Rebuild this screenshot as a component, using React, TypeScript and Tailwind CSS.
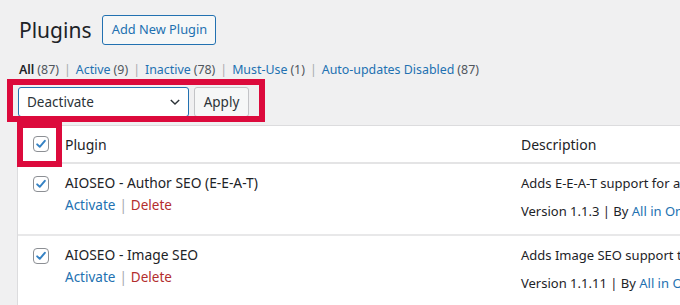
import React from "react";

const RED = "#dc0a3c";

function Check() {
  return (
    <span className="flex h-[16px] w-[16px] items-center justify-center rounded-[4px] border border-[#8c8f94] bg-white">
      <svg width="14" height="14" viewBox="0 0 20 20">
        <path d="M4.5 10.5 L8.2 14 L15.5 5.5" fill="none" stroke="#3582c4" strokeWidth="2.8" strokeLinecap="round" strokeLinejoin="round" />
      </svg>
    </span>
  );
}

function Row({ title, desc, version }: { title: string; desc: string; version: string }) {
  return (
    <div className="flex h-[72px] border-b-2 border-[#e8e8e9] bg-white">
      <div className="w-[47px] shrink-0 pl-[15px] pt-[12px]">
        <Check />
      </div>
      <div className="w-[456px] shrink-0 pt-[9px]">
        <div className="text-[13.8px] leading-[20px] text-[#1d2327]">{title}</div>
        <div className="mt-[2px] text-[13.5px] leading-[20px]">
          <span className="text-[#2271b1]">Activate</span>
          <span className="mx-[4px] text-[#a7aaad]">|</span>
          <span className="text-[#b32d2e]">Delete</span>
        </div>
      </div>
      <div className="shrink-0 whitespace-nowrap pt-[9px] text-[13px] leading-[20px] text-[#1d2327]">
        <div>{desc}</div>
        <div className="mt-[8px]">
          {version} | By <span className="text-[#2271b1]">All in One SEO Team</span>
        </div>
      </div>
    </div>
  );
}

export default function App() {
  return (
    <div
      className="relative h-[305px] w-[680px] overflow-hidden bg-[#f0f0f1] text-[#1d2327]"
      style={{ fontFamily: '"Noto Sans", "Open Sans", sans-serif' }}
    >
      <div className="pl-[19px] pt-[15px]">
        <div className="flex items-center">
          <div className="text-[21px] leading-[30px] text-[#1d2327]">Plugins</div>
          <div className="ml-[11px] flex h-[30px] w-[114px] items-center justify-center rounded-[3px] border border-[#2271b1] bg-[#f6f7f7] text-[12.8px] text-[#2271b1]">
            Add New Plugin
          </div>
        </div>
        <div className="mt-[15px] flex items-center text-[12.4px] leading-[20px] text-[#50575e]">
          <span className="font-semibold text-[#1d2327]">All</span>
          <span className="ml-[3px]">(87)</span>
          <span className="mx-[5px] text-[#a7aaad]">|</span>
          <span className="text-[#2271b1]">Active</span>
          <span className="ml-[3px]">(9)</span>
          <span className="mx-[5px] text-[#a7aaad]">|</span>
          <span className="text-[#2271b1]">Inactive</span>
          <span className="ml-[3px]">(78)</span>
          <span className="mx-[5px] text-[#a7aaad]">|</span>
          <span className="text-[#2271b1]">Must-Use</span>
          <span className="ml-[3px]">(1)</span>
          <span className="mx-[5px] text-[#a7aaad]">|</span>
          <span className="text-[#2271b1]">Auto-updates Disabled</span>
          <span className="ml-[3px]">(87)</span>
        </div>
        <div className="-ml-[1px] mt-[7px] flex">
          <div className="flex h-[30px] w-[171px] items-center justify-between rounded-[3px] border border-[#2271b1] bg-white pl-[8px] pr-[6px] text-[13.5px] text-[#2c3338]">
            <span>Deactivate</span>
            <svg width="14" height="14" viewBox="0 0 20 20">
              <path d="M4 7 L10 13 L16 7" fill="none" stroke="#2c3338" strokeWidth="2" />
            </svg>
          </div>
          <div className="ml-[5px] flex h-[30px] w-[55px] items-center justify-center rounded-[3px] border border-[#c3c4c7] bg-[#f6f7f7] text-[13.5px] text-[#2c3338]">
            Apply
          </div>
        </div>
      </div>
      <div className="ml-[17px] mt-[8px] border-l border-t border-[#dcdcde] bg-white">
        <div className="flex h-[38px] items-center border-b-2 border-[#e4e4e5]">
          <div className="w-[47px] shrink-0 pl-[15px]">
            <Check />
          </div>
          <div className="w-[456px] shrink-0 text-[14px] text-[#1d2327]">Plugin</div>
          <div className="shrink-0 text-[14px] text-[#1d2327]">Description</div>
        </div>
        <Row title="AIOSEO - Author SEO (E-E-A-T)" desc="Adds E-E-A-T support for authors" version="Version 1.1.3" />
        <Row title="AIOSEO - Image SEO" desc="Adds Image SEO support to your site" version="Version 1.1.11" />
      </div>
      <div className="absolute left-[7px] top-[79px] h-[43px] w-[258px] border-[6px]" style={{ borderColor: RED }} />
      <div className="absolute left-[17px] top-[122px] h-[45px] w-[45px] border-[6px]" style={{ borderColor: RED }} />
    </div>
  );
}
